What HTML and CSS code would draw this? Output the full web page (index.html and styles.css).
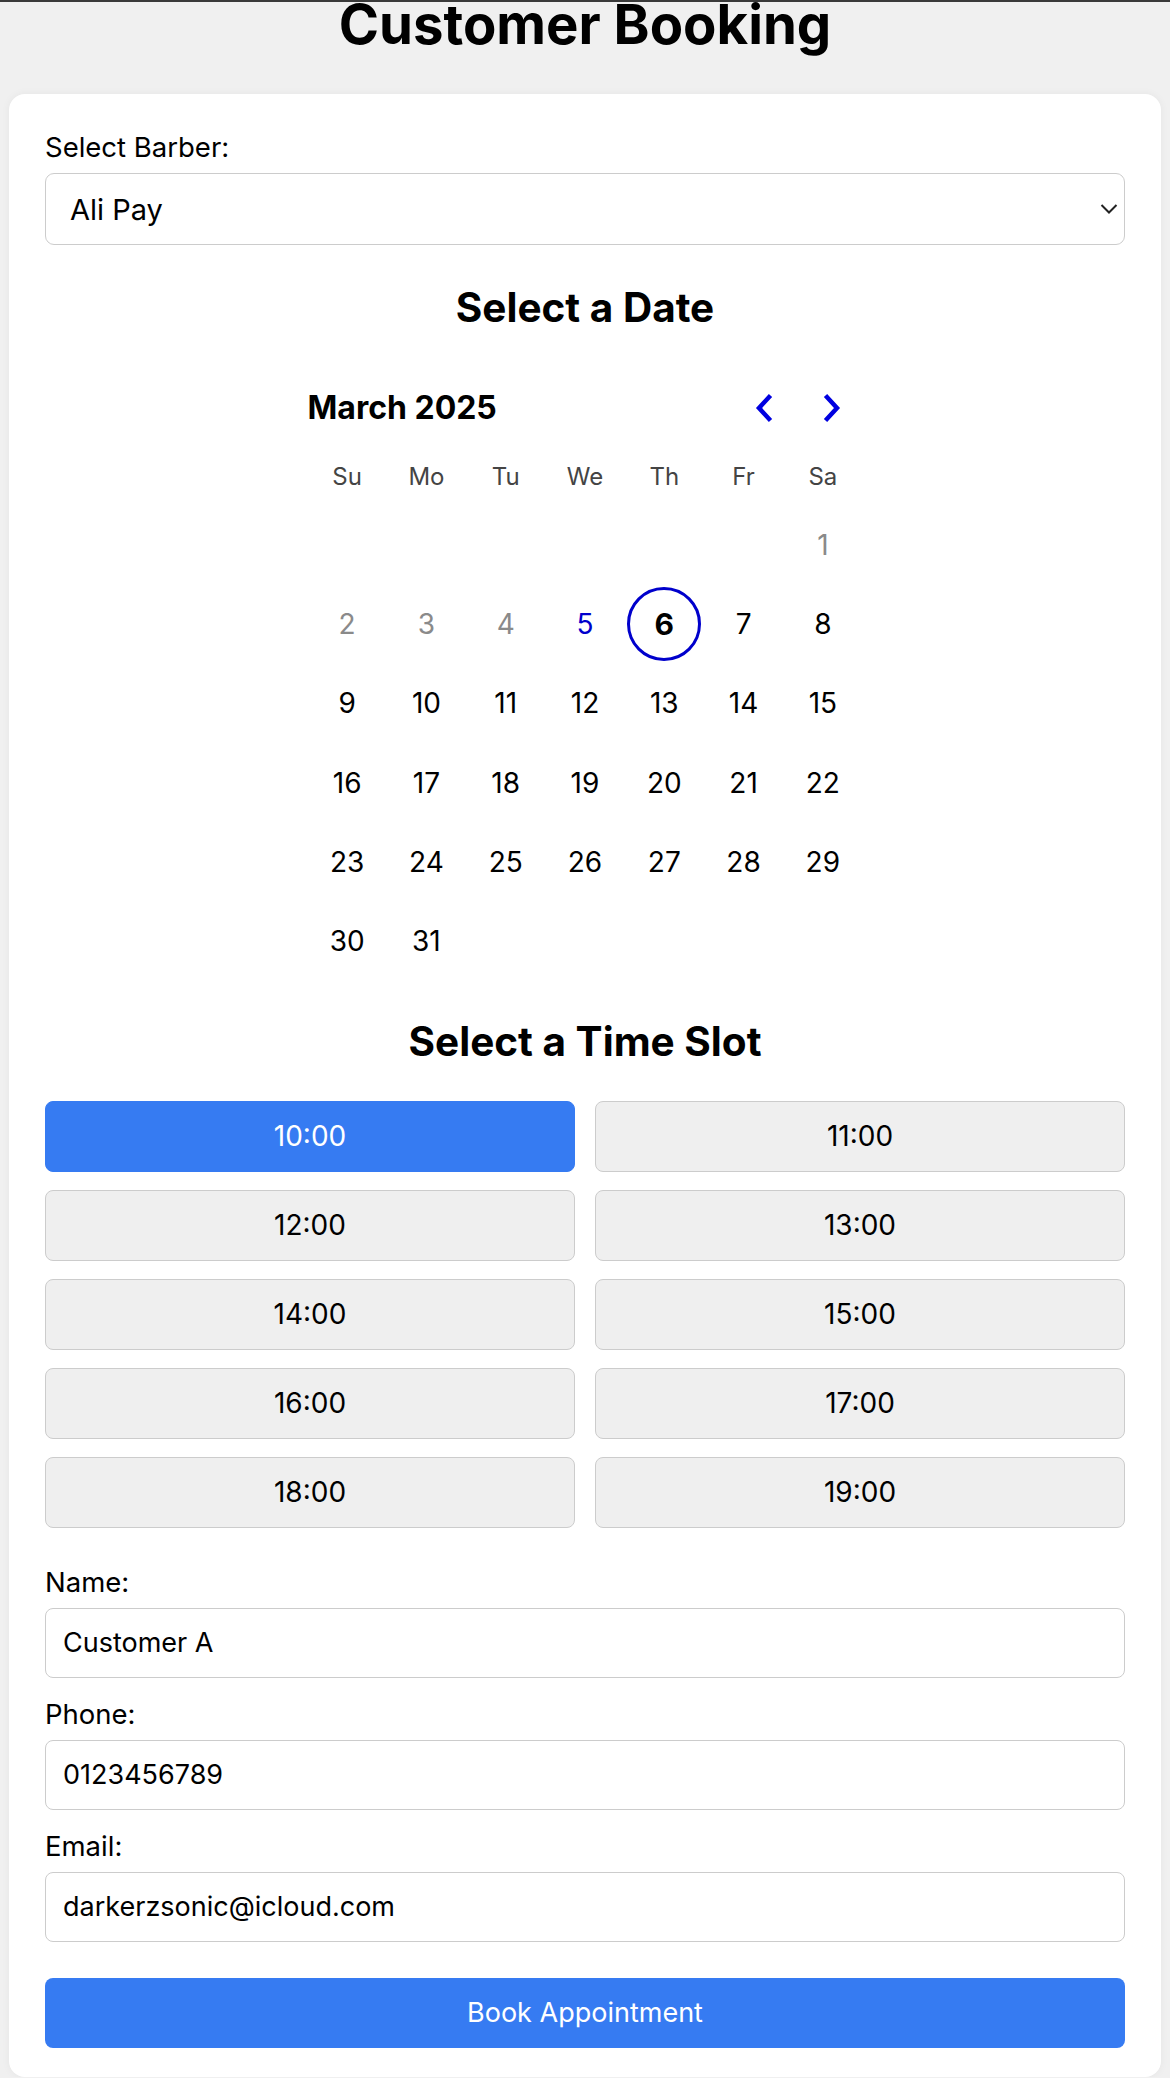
FILE: index.html
```html
<!DOCTYPE html>
<html lang="en">
<head>
<meta charset="utf-8">
<title>Customer Booking</title>
<link rel="stylesheet" href="styles.css">
</head>
<body>
<h1 class="page-title">Customer Booking</h1>
<main class="card">
  <label class="field-label" for="barber">Select Barber:</label>
  <div class="select-wrap">
    <select id="barber" class="select">
      <option>Ali Pay</option>
    </select>
    <svg class="select-chevron" width="18" height="11" viewBox="0 0 18 11" aria-hidden="true"><path d="M1.5 1.5 L9 9 L16.5 1.5"/></svg>
  </div>

  <h2 class="section-title date-title">Select a Date</h2>
  <div class="calendar">
    <div class="cal-header">
      <span class="cal-month">March 2025</span>
      <div class="cal-nav">
        <button class="cal-nav-btn" type="button" aria-label="Previous month"><svg width="18" height="30" viewBox="0 0 18 30"><path d="M15.5 2.5 L4 15 L15.5 27.5"/></svg></button>
        <button class="cal-nav-btn" type="button" aria-label="Next month"><svg width="18" height="30" viewBox="0 0 18 30"><path d="M2.5 2.5 L14 15 L2.5 27.5"/></svg></button>
      </div>
    </div>
    <div class="cal-weekdays">
      <span>Su</span><span>Mo</span><span>Tu</span><span>We</span><span>Th</span><span>Fr</span><span>Sa</span>
    </div>
    <div class="cal-days">
      <span class="day"></span><span class="day"></span><span class="day"></span><span class="day"></span><span class="day"></span><span class="day"></span>
      <span class="day past"><span class="num">1</span></span>
      <span class="day past"><span class="num">2</span></span>
      <span class="day past"><span class="num">3</span></span>
      <span class="day past"><span class="num">4</span></span>
      <span class="day today"><span class="num">5</span></span>
      <span class="day selected"><span class="num">6</span></span>
      <span class="day"><span class="num">7</span></span>
      <span class="day"><span class="num">8</span></span>
      <span class="day"><span class="num">9</span></span>
      <span class="day"><span class="num">10</span></span>
      <span class="day"><span class="num">11</span></span>
      <span class="day"><span class="num">12</span></span>
      <span class="day"><span class="num">13</span></span>
      <span class="day"><span class="num">14</span></span>
      <span class="day"><span class="num">15</span></span>
      <span class="day"><span class="num">16</span></span>
      <span class="day"><span class="num">17</span></span>
      <span class="day"><span class="num">18</span></span>
      <span class="day"><span class="num">19</span></span>
      <span class="day"><span class="num">20</span></span>
      <span class="day"><span class="num">21</span></span>
      <span class="day"><span class="num">22</span></span>
      <span class="day"><span class="num">23</span></span>
      <span class="day"><span class="num">24</span></span>
      <span class="day"><span class="num">25</span></span>
      <span class="day"><span class="num">26</span></span>
      <span class="day"><span class="num">27</span></span>
      <span class="day"><span class="num">28</span></span>
      <span class="day"><span class="num">29</span></span>
      <span class="day"><span class="num">30</span></span>
      <span class="day"><span class="num">31</span></span>
    </div>
  </div>

  <h2 class="section-title time-title">Select a Time Slot</h2>
  <div class="slots">
    <button class="slot active" type="button">10:00</button>
    <button class="slot" type="button">11:00</button>
    <button class="slot" type="button">12:00</button>
    <button class="slot" type="button">13:00</button>
    <button class="slot" type="button">14:00</button>
    <button class="slot" type="button">15:00</button>
    <button class="slot" type="button">16:00</button>
    <button class="slot" type="button">17:00</button>
    <button class="slot" type="button">18:00</button>
    <button class="slot" type="button">19:00</button>
  </div>

  <form class="details">
    <label class="field-label" for="name">Name:</label>
    <input class="input" id="name" type="text" value="Customer A">
    <label class="field-label" for="phone">Phone:</label>
    <input class="input" id="phone" type="tel" value="0123456789">
    <label class="field-label" for="email">Email:</label>
    <input class="input" id="email" type="email" value="darkerzsonic@icloud.com">
    <button class="book-btn" type="button">Book Appointment</button>
  </form>
</main>
</body>
</html>
```

FILE: styles.css
```css
* {
  box-sizing: border-box;
}

html {
  background: #f0f0f0;
}

body {
  margin: 0;
  padding: 0 9px;
  border-top: 2px solid #3a3a3a;
  background: #f0f0f0;
  font-family: Inter, "Noto Sans", "Liberation Sans", sans-serif;
  color: #000;
}

.page-title {
  margin: -2px 0 46px;
  font-size: 54.5px;
  line-height: 48px;
  font-weight: 700;
  text-align: center;
}

.card {
  display: flex;
  flex-direction: column;
  background: #fff;
  border-radius: 16px;
  padding: 37px 36px 29px;
  box-shadow: 0 0 8px rgba(0, 0, 0, 0.05);
}

.field-label {
  display: block;
  font-size: 27.5px;
  line-height: 33px;
  color: #000;
}

.select-wrap {
  position: relative;
  margin-top: 9px;
}

.select {
  display: block;
  width: 100%;
  height: 72px;
  padding: 0 24px;
  border: 1px solid #cccccc;
  border-radius: 9px;
  background: #fff;
  font-family: inherit;
  font-size: 29px;
  color: #000;
  -webkit-appearance: none;
  appearance: none;
}

.select-chevron {
  position: absolute;
  right: 7px;
  top: 50%;
  transform: translateY(-50%);
  fill: none;
  stroke: #222;
  stroke-width: 2;
}

.section-title {
  margin: 0;
  font-size: 40.5px;
  line-height: 48px;
  font-weight: 700;
  text-align: center;
}

.date-title {
  margin-top: 39px;
}

.calendar {
  width: 555px;
  margin: 53px auto 0;
}

.cal-header {
  display: flex;
  align-items: center;
  justify-content: space-between;
  height: 46px;
  margin-bottom: 17px;
}

.cal-month {
  font-size: 32px;
  font-weight: 700;
  line-height: 46px;
}

.cal-nav {
  display: flex;
  gap: 28px;
  padding-right: 11px;
}

.cal-nav-btn {
  display: flex;
  align-items: center;
  justify-content: center;
  width: 40px;
  height: 46px;
  padding: 0;
  border: 0;
  background: none;
}

.cal-nav-btn svg {
  fill: none;
  stroke: #0000e0;
  stroke-width: 4.5;
}

.cal-weekdays {
  display: grid;
  grid-template-columns: repeat(7, 1fr);
  height: 57px;
  align-items: center;
  font-size: 24px;
  line-height: 30px;
  color: #444;
  text-align: center;
}

.cal-days {
  display: grid;
  grid-template-columns: repeat(7, 1fr);
  grid-auto-rows: 79.3px;
}

.day {
  display: flex;
  align-items: center;
  justify-content: center;
  font-size: 28px;
  color: #000;
}

.num {
  display: flex;
  align-items: center;
  justify-content: center;
  width: 74px;
  height: 74px;
  border-radius: 50%;
}

.day.past {
  color: #8a8a8a;
}

.day.today {
  color: #0000cc;
}

.day.selected .num {
  border: 3px solid #0000cc;
  font-weight: 700;
  font-size: 30px;
}

.time-title {
  margin-top: 37px;
}

.slots {
  display: grid;
  grid-template-columns: 1fr 1fr;
  column-gap: 20px;
  row-gap: 18px;
  margin-top: 35px;
}

.slot {
  height: 71px;
  border: 1px solid #cccccc;
  border-radius: 8px;
  background: #efefef;
  font-family: inherit;
  font-size: 28px;
  color: #000;
  padding: 0;
}

.slot.active {
  background: #367bf2;
  border-color: #367bf2;
  color: #fff;
}

.details {
  display: flex;
  flex-direction: column;
  margin: 38px 0 0;
}

.details .field-label + .input {
  margin-top: 9px;
}

.details .input + .field-label {
  margin-top: 20px;
}

.input {
  display: block;
  width: 100%;
  height: 70px;
  padding: 0 17px;
  border: 1px solid #cccccc;
  border-radius: 8px;
  background: #fff;
  font-family: inherit;
  font-size: 27px;
  color: #000;
}

.book-btn {
  margin-top: 36px;
  height: 70px;
  border: 0;
  border-radius: 8px;
  background: #367bf2;
  color: #fff;
  font-family: inherit;
  font-size: 27px;
  padding: 0;
}
```
